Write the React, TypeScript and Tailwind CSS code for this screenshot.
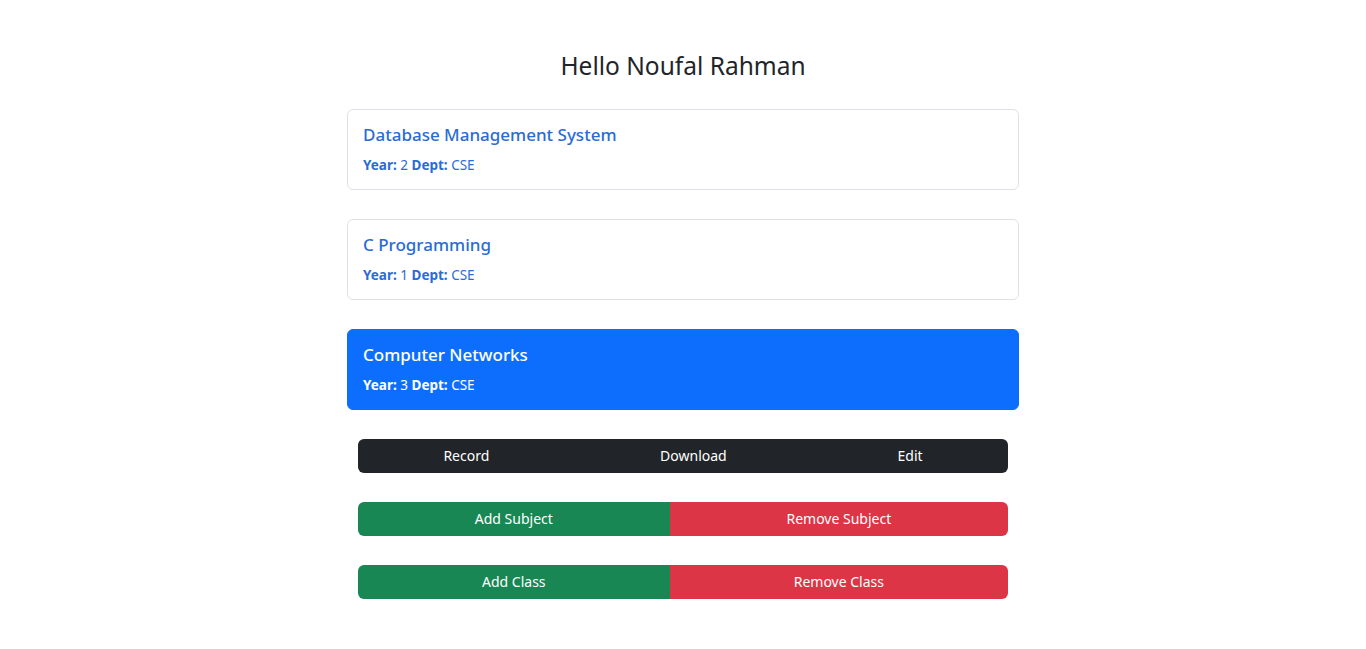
import React from "react";

const font = { fontFamily: '"Segoe UI", "Noto Sans", "Open Sans", sans-serif' };

type Subject = { name: string; year: number; dept: string; active?: boolean };

const subjects: Subject[] = [
  { name: "Database Management System", year: 2, dept: "CSE" },
  { name: "C Programming", year: 1, dept: "CSE" },
  { name: "Computer Networks", year: 3, dept: "CSE", active: true },
];

function Card({ s }: { s: Subject }) {
  const base = s.active
    ? "bg-[#0d6efd] border-[#0d6efd] text-white"
    : "bg-white border-[#dee2e6] text-[#2b6bd6]";
  return (
    <div className={`w-full rounded-[6px] border px-[15px] pt-[13px] pb-[13px] ${base}`}>
      <div className="h-6 text-[17px] leading-6 font-medium">{s.name}</div>
      <div className="mt-2 text-[13.5px] leading-[21px]">
        <span className="font-bold">Year:</span> {s.year}{" "}
        <span className="font-bold">Dept:</span> {s.dept}
      </div>
    </div>
  );
}

function Btn({ label, cls, first, last }: { label: string; cls: string; first?: boolean; last?: boolean }) {
  return (
    <button
      className={`flex-auto h-[34px] px-3 text-[14px] text-white leading-[34px] ${cls} ${first ? "rounded-l-[6px]" : ""} ${last ? "rounded-r-[6px]" : ""}`}
    >
      {label}
    </button>
  );
}

export default function App() {
  return (
    <div className="min-h-[649px] bg-white" style={font}>
      <div className="mx-auto w-[672px] pt-[49px] flex flex-col items-center">
        <h3 className="text-[24.5px] leading-[34px] text-[#212529] font-normal">Hello Noufal Rahman</h3>
        <div className="mt-[26px] w-full flex flex-col gap-[29px]">
          {subjects.map((s) => (
            <Card key={s.name} s={s} />
          ))}
        </div>
        <div className="mt-[29px] w-[650px] flex flex-col gap-[29px]">
          <div className="flex">
            <Btn label="Record" cls="bg-[#212529]" first />
            <Btn label="Download" cls="bg-[#212529]" />
            <Btn label="Edit" cls="bg-[#212529]" last />
          </div>
          <div className="flex">
            <Btn label="Add Subject" cls="bg-[#198754]" first />
            <Btn label="Remove Subject" cls="bg-[#dc3545]" last />
          </div>
          <div className="flex">
            <Btn label="Add Class" cls="bg-[#198754]" first />
            <Btn label="Remove Class" cls="bg-[#dc3545]" last />
          </div>
        </div>
      </div>
    </div>
  );
}
